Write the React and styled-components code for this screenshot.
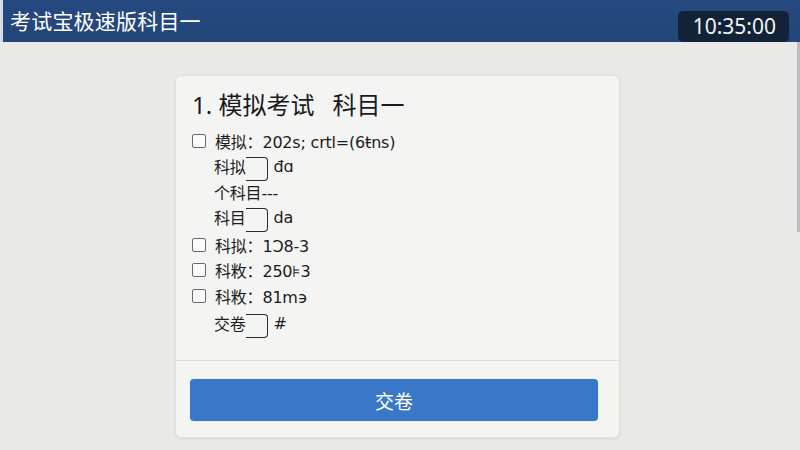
import React from "react";
import styled, { createGlobalStyle } from "styled-components";

const Global = createGlobalStyle`
  html, body { margin: 0; padding: 0; }
  body {
    width: 800px;
    height: 450px;
    overflow: hidden;
    background: #e9e9e8;
    font-family: "Noto Sans", "Noto Sans CJK SC", sans-serif;
  }
`;

const Page = styled.div`
  display: flex;
  flex-direction: column;
  height: 450px;
`;

const Header = styled.header`
  height: 42px;
  flex: none;
  display: flex;
  align-items: center;
  justify-content: space-between;
  padding: 0 11px 0 7px;
  background: linear-gradient(180deg, #254a80 0%, #234578 100%);
  border-left: 3px solid #d9dde3;
  box-sizing: border-box;
`;

const AppTitle = styled.h1`
  margin: 0 0 2px 0;
  font-size: 21px;
  font-weight: 400;
  color: #ffffff;
  letter-spacing: 0.2px;
  font-family: "Noto Sans CJK SC", sans-serif;
`;

const Clock = styled.div`
  margin-top: 11px;
  padding: 2px 13px 2px 15px;
  border-radius: 5px;
  background: #122239;
  color: #f2f2f2;
  font-size: 21px;
  line-height: 27px;
`;

const Main = styled.main`
  flex: 1;
  display: flex;
  justify-content: center;
  padding: 33px 0 0 0;
  position: relative;
`;

const ScrollThumb = styled.div`
  position: absolute;
  right: 0;
  top: 0;
  width: 3px;
  height: 190px;
  background: #bdbdbd;
`;

const Card = styled.section`
  width: 445px;
  height: 363px;
  box-sizing: border-box;
  margin-left: -5px;
  background: #f4f4f3;
  border: 1px solid #e0e0df;
  border-radius: 6px;
  box-shadow: 0 1px 3px rgba(0, 0, 0, 0.08);
  display: flex;
  flex-direction: column;
`;

const Body = styled.div`
  flex: 1;
  padding: 13px 16px 0 16px;
  border-bottom: 1px solid #dcdcdb;
`;

const Question = styled.h2`
  margin: 0 0 7px 0;
  font-size: 24px;
  font-weight: 400;
  color: #1a1a1a;
  line-height: 32px;
  display: flex;
  gap: 18px;
`;

const Row = styled.div`
  display: flex;
  align-items: center;
  height: 25.5px;
  margin-top: ${(p) => (p.$gap ? 2 : 0)}px;
  padding-left: ${(p) => (p.$indent ? 22 : 0)}px;
  font-size: 16px;
  font-family: "DejaVu Sans", "Noto Sans CJK SC", sans-serif;
  letter-spacing: -0.2px;
  color: #1c1c1c;
  white-space: pre;
`;

const Check = styled.span`
  width: 12px;
  height: 12px;
  border: 1.3px solid #6a6a6a;
  border-radius: 2px;
  margin-right: 9px;
  flex: none;
  background: #fafafa;
`;

const Blank = styled.span`
  display: inline-block;
  width: 21px;
  height: 22px;
  margin: 0 6px 0 0;
  border: 1.5px solid #2a2a2a;
  border-left: none;
  border-radius: 0 4px 4px 0;
  position: relative;
  top: 3px;
`;

const Footer = styled.div`
  padding: 18px 21px 16px 14px;
`;

const Submit = styled.button`
  width: 100%;
  height: 42px;
  border: none;
  border-radius: 4px;
  background: #3878c6;
  color: #ffffff;
  font-size: 19px;
  font-family: "Noto Sans CJK SC", sans-serif;
  box-shadow: 0 0 0 1px #e8eef6;
`;

const options = [
  { check: true, text: "模拟：202s; crtl=(6ŧns)" },
  { indent: true, pre: "科拟", post: "đɑ" },
  { indent: true, text: "个科目---" },
  { indent: true, pre: "科目", post: "da" },
  { check: true, gap: true, text: "科拟：1Ͻ8-3" },
  { check: true, text: "科敉：250⊧3" },
  { check: true, text: "科敉：81m϶" },
  { indent: true, gap: true, pre: "交卷", post: "#" },
];

export default function App() {
  return (
    <>
      <Global />
      <Page>
        <Header>
          <AppTitle>考试宝极速版科目一</AppTitle>
          <Clock>10:35:00</Clock>
        </Header>
        <Main>
          <Card>
            <Body>
              <Question>
                <span>1. 模拟考试</span>
                <span>科目一</span>
              </Question>
              {options.map((o, i) => (
                <Row key={i} $indent={o.indent} $gap={o.gap}>
                  {o.check && <Check />}
                  {o.text ? (
                    o.text
                  ) : (
                    <>
                      {o.pre}
                      <Blank />
                      {o.post}
                    </>
                  )}
                </Row>
              ))}
            </Body>
            <Footer>
              <Submit>交卷</Submit>
            </Footer>
          </Card>
          <ScrollThumb />
        </Main>
      </Page>
    </>
  );
}
